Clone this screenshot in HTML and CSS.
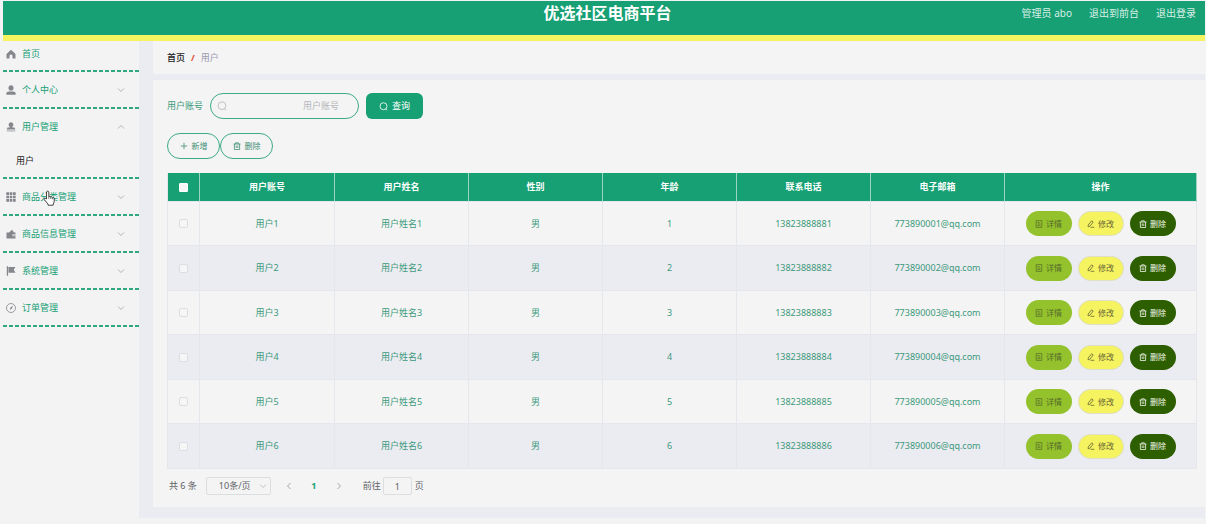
FILE: index.html
```html
<!DOCTYPE html>
<html lang="zh-CN">
<head>
<meta charset="utf-8">
<title>优选社区电商平台</title>
<link rel="stylesheet" href="styles.css">
</head>
<body>
<svg class="sprite" aria-hidden="true">
  <symbol id="down" viewBox="0 0 8 8"><path d="M1 2.500 4 5.500 7 2.500" fill="none" stroke="currentColor"/></symbol>
  <symbol id="up" viewBox="0 0 8 8"><path d="M1 5.500 4 2.500 7 5.500" fill="none" stroke="currentColor"/></symbol>
  <symbol id="left" viewBox="0 0 8 8"><path d="M5.500 1 2.500 4 5.500 7" fill="none" stroke="currentColor"/></symbol>
  <symbol id="right" viewBox="0 0 8 8"><path d="M2.500 1 5.500 4 2.500 7" fill="none" stroke="currentColor"/></symbol>
  <symbol id="home" viewBox="0 0 10 10"><path d="M5 .8 9.500 4.900V9.500H6.500V7a1.500 1.500 0 0 0-3 0V9.500H.5V4.900z" fill="currentColor"/></symbol>
  <symbol id="person" viewBox="0 0 10 10"><ellipse cx="5" cy="3" rx="2.500" ry="2.800" fill="currentColor"/><path d="M.4 9.700V8.200Q.4 6.400 2.700 6.400H7.300Q9.600 6.400 9.600 8.200V9.700z" fill="currentColor"/></symbol>
  <symbol id="stamp" viewBox="0 0 10 10"><path d="M5 .3a2.400 2.400 0 0 1 1.600 4.200L6.200 5.600H8.500L9.400 7.600H.6L1.500 5.600H3.800L3.400 4.500A2.400 2.400 0 0 1 5 .3z" fill="currentColor"/><path d="M.8 8.900h8.400" stroke="currentColor" stroke-width="1.200" opacity=".6"/></symbol>
  <symbol id="grid" viewBox="0 0 10 10"><path d="M.3.300h2.700V3H.3zM3.700.300h2.600V3H3.700zM7 .3h2.700V3H7zM.3 3.700h2.700v2.600H.3zM3.700 3.700h2.600v2.600H3.700zM7 3.700h2.700v2.600H7zM.3 7h2.700v2.700H.3zM3.700 7h2.600v2.700H3.700zM7 7h2.700v2.700H7z" fill="currentColor"/></symbol>
  <symbol id="wallet" viewBox="0 0 10 10"><path d="M.5 3.500H3L6 .8 8 3.500H9.500V5.200H6.500V7.200H9.500V9.500H.5z" fill="currentColor"/><path d="M7.200 5.800h2.300v.8H7.200z" fill="currentColor"/></symbol>
  <symbol id="flag" viewBox="0 0 10 10"><path d="M.8.300h1.300V9.800H.8zM2.500.900H9.500L7.700 3.800 9.500 6.800H2.500z" fill="currentColor"/></symbol>
  <symbol id="compass" viewBox="0 0 10 10"><circle cx="5" cy="5" r="4.500" fill="none" stroke="currentColor" stroke-width=".8"/><path d="M7.200 2.400 5.700 5.700 4 7 4.400 4.600z" fill="currentColor"/></symbol>
  <symbol id="search" viewBox="0 0 10 10"><circle cx="5" cy="4.700" r="3.900" fill="none" stroke="currentColor" stroke-width=".9"/><path d="M7.300 7.500 9 9.300" stroke="currentColor" stroke-width=".9"/></symbol>
  <symbol id="plus" viewBox="0 0 8 8"><path d="M4 .8v6.400M.8 4h6.400" stroke="currentColor" stroke-width=".8"/></symbol>
  <symbol id="trash" viewBox="0 0 8 8"><path d="M.5 2h7M2.700 2V.8h2.600V2M1.400 2v5.500h5.200V2M3.200 3.500v2.500M4.800 3.500v2.500" fill="none" stroke="currentColor" stroke-width=".8"/></symbol>
  <symbol id="doc" viewBox="0 0 8 8"><path d="M1.200.600h5.600v6.800H1.200zM2.500 2.500h2M2.500 4h3M2.500 5.600h3" fill="none" stroke="currentColor" stroke-width=".7"/></symbol>
  <symbol id="edit" viewBox="0 0 8 8"><path d="M4.600.800 6.200 2 3 6.200 1.100 6.800 1.200 5zM3.500 7.300h3.800" fill="none" stroke="currentColor" stroke-width=".8"/></symbol>
</svg>

<div class="app">
  <header class="topbar">
    <h1 class="brand">优选社区电商平台</h1>
    <nav class="account">
      <span>管理员 abo</span>
      <a href="#">退出到前台</a>
      <a href="#">退出登录</a>
    </nav>
  </header>
  <div class="body">
    <nav class="sidebar">
      <ul class="menu">
        <li class="menu-group menu-home"><a class="menu-item" href="#"><svg class="menu-icon"><use href="#home"/></svg><span>首页</span></a></li>
        <li class="menu-group"><a class="menu-item" href="#"><svg class="menu-icon"><use href="#person"/></svg><span>个人中心</span><svg class="arrow"><use href="#down"/></svg></a></li>
        <li class="menu-group"><a class="menu-item" href="#"><svg class="menu-icon"><use href="#stamp"/></svg><span>用户管理</span><svg class="arrow"><use href="#up"/></svg></a><a class="submenu-item" href="#">用户</a></li>
        <li class="menu-group hovered"><a class="menu-item" href="#"><svg class="menu-icon"><use href="#grid"/></svg><span>商品分类管理</span><svg class="arrow"><use href="#down"/></svg></a>
          <svg class="pointer" viewBox="0 0 12 16" aria-hidden="true"><path d="M3.500 9V2a1.200 1.200 0 0 1 2.300 0v4.500q1.500-.8 2 .4 1.300-.6 1.800.6 1.600-.3 1.600 1.200V11q0 2-1 3v1.200H5V14L1.200 9.500q-.6-1.500.9-1.300z" fill="#fff" stroke="#333" stroke-width=".9"/><path d="M5.800 6.500v2.300M7.800 7v2M9.600 7.600v1.600" stroke="#333" stroke-width=".7"/></svg></li>
        <li class="menu-group"><a class="menu-item" href="#"><svg class="menu-icon"><use href="#wallet"/></svg><span>商品信息管理</span><svg class="arrow"><use href="#down"/></svg></a></li>
        <li class="menu-group"><a class="menu-item" href="#"><svg class="menu-icon"><use href="#flag"/></svg><span>系统管理</span><svg class="arrow"><use href="#down"/></svg></a></li>
        <li class="menu-group"><a class="menu-item" href="#"><svg class="menu-icon"><use href="#compass"/></svg><span>订单管理</span><svg class="arrow"><use href="#down"/></svg></a></li>
      </ul>
    </nav>
    <main class="content">
      <nav class="breadcrumb"><a href="#">首页</a><span class="slash">/</span><span class="current">用户</span></nav>
      <section class="card">
        <form class="filter">
          <label for="account">用户账号</label>
          <div class="search-box"><svg class="search-icon"><use href="#search"/></svg><input id="account" type="text" placeholder="用户账号"></div>
          <button class="query" type="button"><svg><use href="#search"/></svg>查询</button>
        </form>
        <div class="toolbar">
          <button class="outline" type="button"><svg><use href="#plus"/></svg>新增</button>
          <button class="outline" type="button"><svg><use href="#trash"/></svg>删除</button>
        </div>
        <table class="users">
          <colgroup><col class="col-check"><col class="col-account"><col><col><col><col><col><col class="col-actions"></colgroup>
          <thead><tr><th><input type="checkbox" aria-label="全选"></th><th>用户账号</th><th>用户姓名</th><th>性别</th><th>年龄</th><th>联系电话</th><th>电子邮箱</th><th>操作</th></tr></thead>
          <tbody id="rows"></tbody>
        </table>
        <div class="pager">
          <span>共 6 条</span>
          <div class="size"><select aria-label="每页条数"><option>10条/页</option></select><svg><use href="#down"/></svg></div>
          <button class="page-btn" type="button" aria-label="上一页"><svg><use href="#left"/></svg></button>
          <button class="page-btn active" type="button">1</button>
          <button class="page-btn" type="button" aria-label="下一页"><svg><use href="#right"/></svg></button>
          <label class="jump">前往<input type="text" value="1">页</label>
        </div>
      </section>
    </main>
  </div>
</div>
<script src="users.js"></script>
</body>
</html>
```
FILE: styles.css
```css
* { box-sizing: border-box; }

body {
  margin: 0;
  padding: 1px 1px 0 3px;
  background: #f3f3f3;
  color: #606266;
  font: 9px/12px "Noto Sans", "Noto Sans CJK SC", sans-serif;
}

a { color: inherit; text-decoration: none; }
button, input, select { margin: 0; padding: 0; font: inherit; color: inherit; }
button { border: 0; background: none; cursor: pointer; }
svg { flex: none; width: 8px; height: 8px; }
.sprite { position: absolute; width: 0; height: 0; }

.topbar {
  display: grid;
  grid-template-columns: 1fr auto 1fr;
  height: 40px;
  padding: 0 9px 0 16px;
  border-bottom: 6px solid #f5f35f;
  background: #16a074;
  color: #fff;
}
.brand {
  grid-column: 2;
  margin: 0;
  font-size: 16px;
  line-height: 24px;
}
.account {
  display: flex;
  justify-content: flex-end;
  gap: 17px;
  font-size: 10px;
  line-height: 24px;
  color: #d8efe6;
}

.body { display: flex; background: #ebecf1; }
.sidebar { width: 136px; flex: none; background: #f3f3f4; }
.menu { margin: 0; padding: 0; list-style: none; color: #16a074; }
.menu-group {
  padding-bottom: 2px;
  background: repeating-linear-gradient(90deg, #2fa881 0 4px, transparent 4px 6px) left bottom / 100% 2px no-repeat;
}
.menu-item {
  display: flex;
  align-items: center;
  gap: 6px;
  height: 35px;
  padding: 0 14px 0 3px;
}
.menu-home .menu-item { height: 29px; padding-bottom: 4px; }
.menu-icon { width: 10px; height: 10px; color: #85878c; }
.arrow { margin-left: auto; color: #b4b5b9; }
.submenu-item {
  display: block;
  padding: 0 13px;
  line-height: 33px;
  color: #222;
}
.hovered { position: relative; }
.pointer {
  position: absolute;
  left: 40px;
  top: 11px;
  width: 12px;
  height: 16px;
}

.content {
  display: flex;
  flex: 1;
  flex-direction: column;
  gap: 6px;
  min-width: 0;
  padding: 0 0 11px 14px;
}
.breadcrumb {
  display: flex;
  gap: 6px;
  padding: 0 14px;
  background: #f4f4f4;
  line-height: 33px;
  color: #222;
}
.breadcrumb a { font-weight: 500; }
.slash { color: #e04a32; font-weight: bold; }
.current { color: #9a9aae; }

.card { padding: 13px 8px 12px 14px; background: #f4f4f4; }
.filter, .toolbar { display: flex; align-items: center; }
.filter { gap: 7px; color: #3b9a7b; }
.search-box {
  display: flex;
  align-items: center;
  width: 149px;
  height: 26px;
  padding: 0 19px 0 6px;
  border: 1px solid #3dab87;
  border-radius: 13px;
}
.search-icon { width: 10px; height: 10px; color: #b9bbc0; }
.search-box input {
  flex: 1;
  min-width: 0;
  border: 0;
  outline: 0;
  background: none;
  text-align: right;
}
.search-box input::placeholder { color: #b5b7bc; opacity: 1; }
.query, .outline {
  display: flex;
  align-items: center;
  justify-content: center;
  gap: 4px;
  height: 26px;
}
.query { width: 57px; border-radius: 6px; background: #16a074; color: #fff; }
.query svg { width: 9px; height: 9px; }
.toolbar { margin: 14px 0; }
.outline {
  width: 53px;
  border: 1px solid #3dab87;
  border-radius: 13px;
  color: #3f8f76;
  font-size: 8px;
}

.users {
  width: 100%;
  border-collapse: separate;
  border-spacing: 0;
  border-left: 1px solid #e6e7ed;
  table-layout: fixed;
  text-align: center;
  color: #3b9a7b;
}
.col-check { width: 32px; }
.col-account { width: 135px; }
.col-actions { width: 192px; }
.users th, .users td {
  padding: 0;
  border-right: 1px solid #e6e7ed;
  border-bottom: 1px solid #e6e7ed;
}
.users th {
  height: 29px;
  border-right-color: #9dd4c1;
  background: #16a074;
  color: #fff;
}
.users td { height: 44px; }
.users tr:nth-child(even) td { height: 45px; background: #ebebf2; }
.users input {
  display: block;
  width: 9px;
  height: 9px;
  margin: 0 auto;
  border: 1px solid #dddee3;
  border-radius: 2px;
  background: #f6f6f6;
  appearance: none;
}
.users th input { border-color: #fff; border-radius: 1px; }

.actions { display: flex; justify-content: center; gap: 6px; }
.action {
  display: flex;
  align-items: center;
  justify-content: center;
  gap: 3px;
  width: 46px;
  height: 25px;
  border-radius: 13px;
  font-size: 8px;
}
.detail { background: #93c22c; color: #566a2b; }
.modify { border: 1px solid #dedfc4; background: #f5f35f; color: #686636; }
.remove { background: #2d5f00; color: #f2f6ee; }

.pager {
  display: flex;
  align-items: center;
  margin-top: 8px;
  padding-left: 2px;
}
.size { position: relative; width: 65px; margin: 0 9px; }
.size select {
  display: block;
  width: 100%;
  height: 18px;
  padding-left: 12px;
  border: 1px solid #dcdde1;
  border-radius: 2px;
  background: none;
  appearance: none;
}
.size svg { position: absolute; right: 4px; top: 5px; color: #c0c2c7; }
.page-btn {
  display: flex;
  align-items: center;
  justify-content: center;
  width: 18px;
  height: 18px;
  margin-right: 7px;
  color: #a4a6ab;
}
.active { color: #16a074; font-weight: bold; }
.jump { display: flex; align-items: center; gap: 2px; margin-left: 8px; }
.jump input {
  width: 29px;
  height: 18px;
  margin-right: 1px;
  border: 1px solid #dcdde1;
  border-radius: 2px;
  background: none;
  text-align: center;
}
```
FILE: users.js
```js
const action = (kind, icon, label) =>
  `<button type="button" class="action ${kind}"><svg><use href="#${icon}"/></svg>${label}</button>`;

document.getElementById('rows').innerHTML = [1, 2, 3, 4, 5, 6].map(n => `
  <tr>
    <td><input type="checkbox" aria-label="选择用户${n}"></td>
    <td>用户${n}</td>
    <td>用户姓名${n}</td>
    <td>男</td>
    <td>${n}</td>
    <td>1382388888${n}</td>
    <td>77389000${n}@qq.com</td>
    <td><div class="actions">${action('detail', 'doc', '详情')}${action('modify', 'edit', '修改')}${action('remove', 'trash', '删除')}</div></td>
  </tr>`).join('');
```
